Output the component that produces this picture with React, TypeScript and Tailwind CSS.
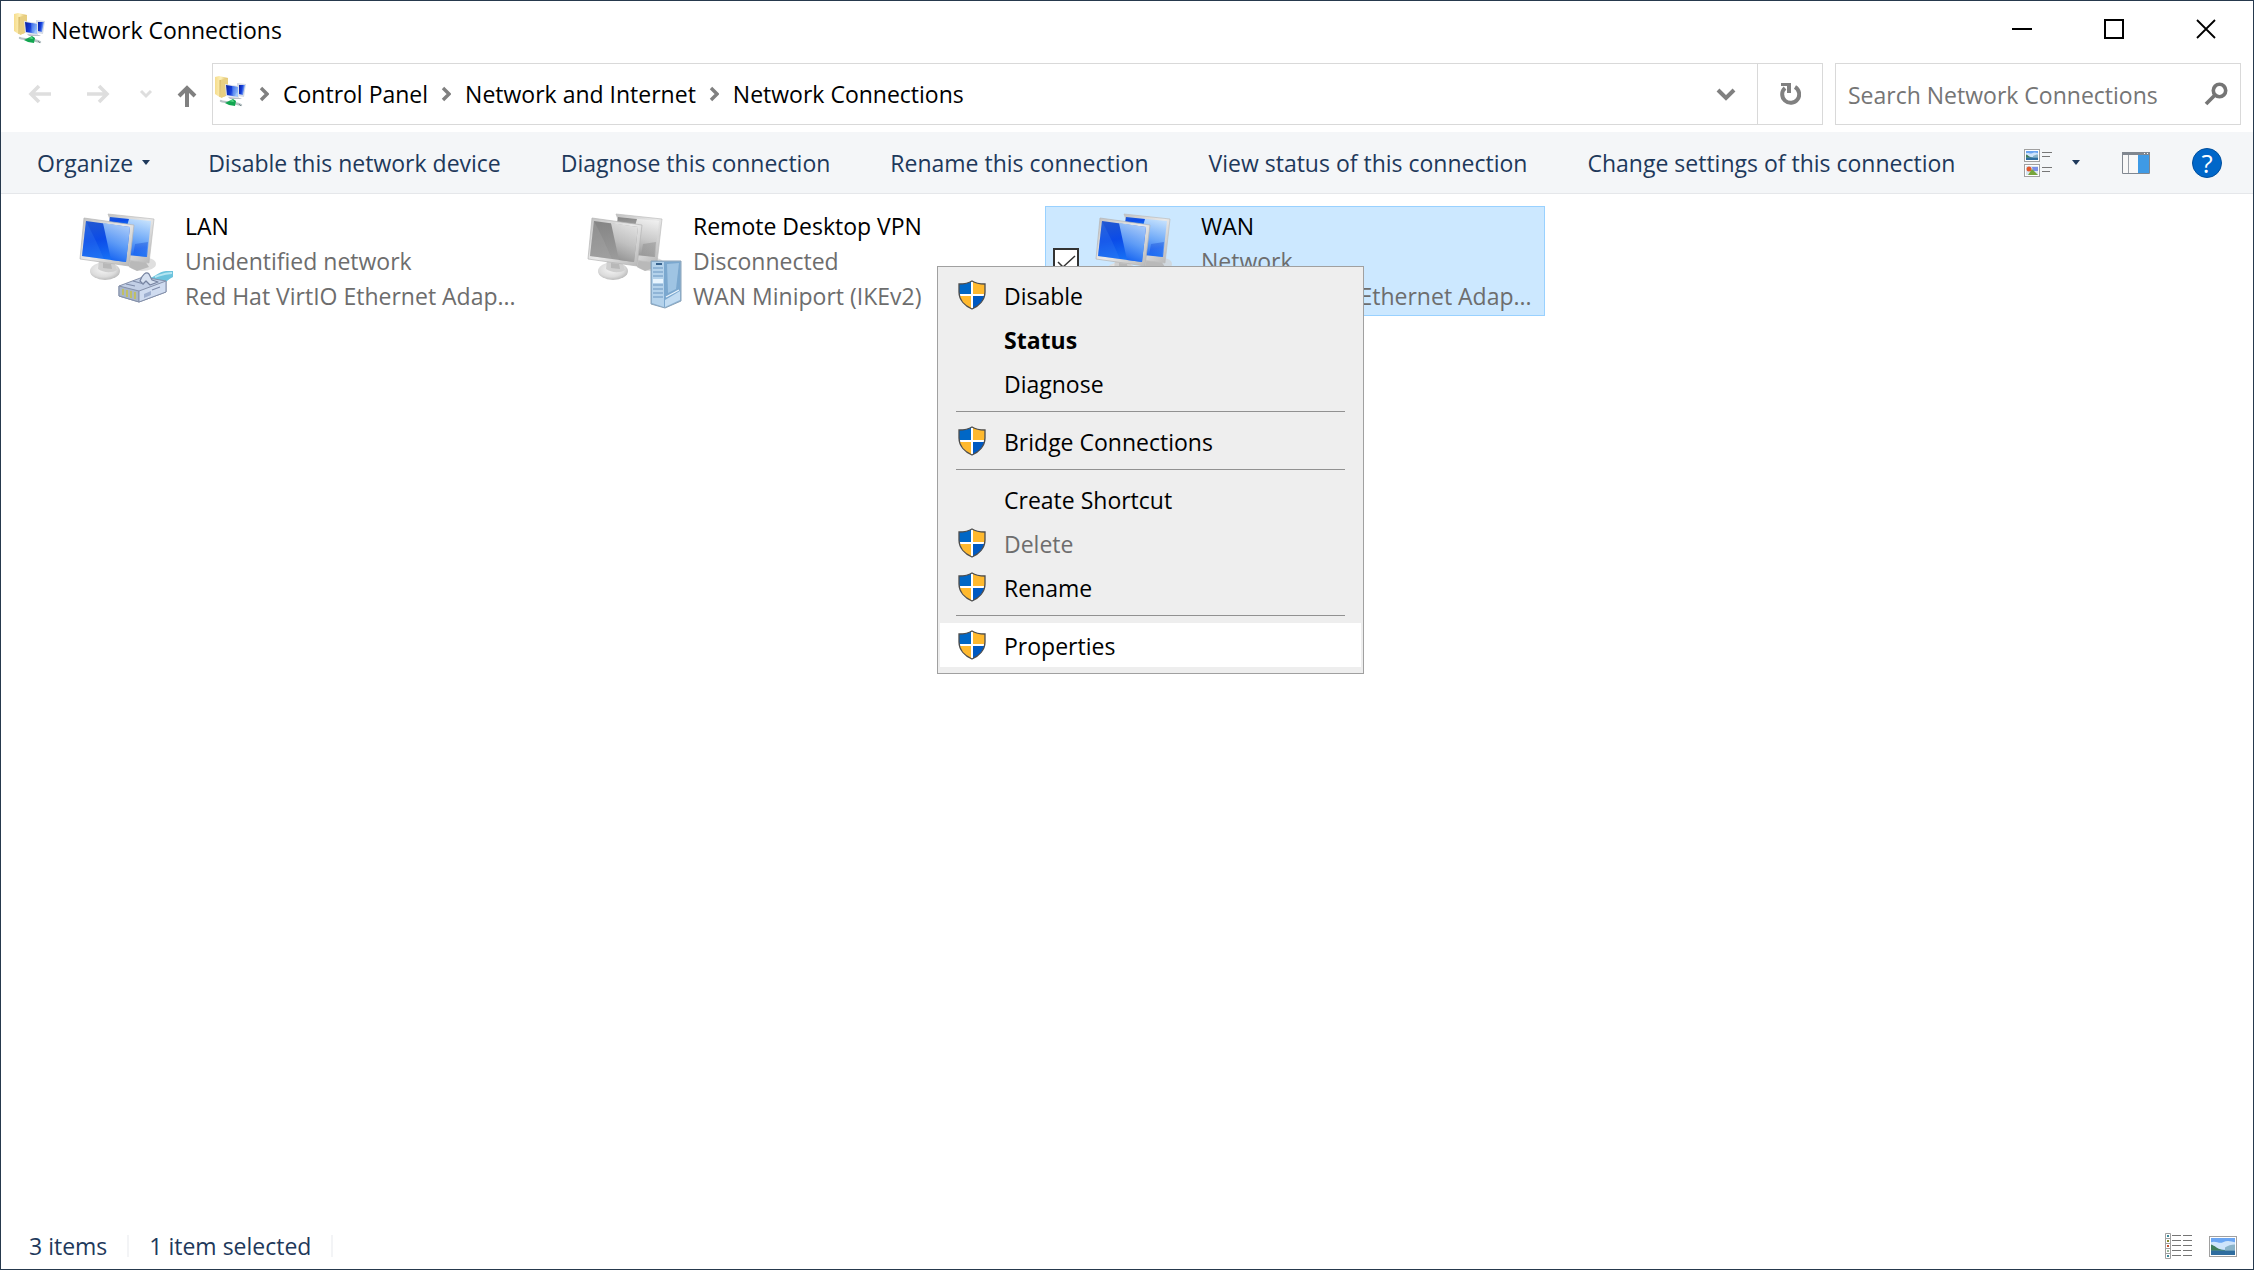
import { useState } from "react";
import type { ReactNode } from "react";

type MenuEntry = {
  label: string;
  shield?: boolean;
  bold?: boolean;
  disabled?: boolean;
  active?: boolean;
};

const MENU_GROUPS: MenuEntry[][] = [
  [
    { label: "Disable", shield: true },
    { label: "Status", bold: true },
    { label: "Diagnose" },
  ],
  [{ label: "Bridge Connections", shield: true }],
  [
    { label: "Create Shortcut" },
    { label: "Delete", shield: true, disabled: true },
    { label: "Rename", shield: true },
  ],
  [{ label: "Properties", shield: true, active: true }],
];

const COMMANDS = [
  "Disable this network device",
  "Diagnose this connection",
  "Rename this connection",
  "View status of this connection",
  "Change settings of this connection",
];

const CRUMBS = ["Control Panel", "Network and Internet", "Network Connections"];

function FolderNetIcon() {
  return (
    <svg viewBox="0 0 32 32" className="size-8 shrink-0" aria-hidden="true">
      <defs>
        <linearGradient id="folder" x1="0" x2="1">
          <stop offset="0" stopColor="#f6dc8b" />
          <stop offset="0.45" stopColor="#fdf0b8" />
          <stop offset="1" stopColor="#d9b65a" />
        </linearGradient>
        <linearGradient id="smallScreen" x1="0" y1="0" x2="1" y2="0.3">
          <stop offset="0" stopColor="#0a1f9c" />
          <stop offset="0.55" stopColor="#1540dd" />
          <stop offset="1" stopColor="#9cc4fb" />
        </linearGradient>
      </defs>
      <path d="M0 1 4 0 13 2v17l-7 3-6-4z" fill="url(#folder)" />
      <path d="M5 4 13 2v17l-7 3z" fill="#e8cf82" />
      <path d="M5 4v17" stroke="#c9a64c" strokeWidth="0.8" />
      <path d="m22 7 9 1-2 13-7-1z" fill="#d5dbe6" />
      <path d="m24 9 6 0-2 10-4-1z" fill="url(#smallScreen)" />
      <path d="m10 8 14 2 0 12-13-2z" fill="#dfe3ea" />
      <path d="m11 9 12 2v10l-11-2z" fill="url(#smallScreen)" />
      <path d="m17 10 6 1v5l-5 4z" fill="#6ea0f5" opacity="0.5" />
      <path d="m13 21 12 1 2 1-12 0z" fill="#b9bfc7" />
      <path d="M6 25c5 2 13 1 20 4" fill="none" stroke="#b7c3c5" strokeWidth="2.4" strokeLinecap="round" />
      <path d="m10 27 8-4 3 2-1 5-6-1z" fill="#12a650" />
      <path d="m14 25 4-1 1 2z" fill="#5ee08c" />
      <path d="m24 28 2 2" stroke="#7d8a8c" strokeWidth="1" />
    </svg>
  );
}

function Monitors({ gray, children }: { gray?: boolean; children?: ReactNode }) {
  const screen = gray ? "url(#screenGray)" : "url(#screenBlue)";
  const gloss = gray ? "url(#glossGray)" : "url(#glossBlue)";
  return (
    <svg viewBox="0 0 96 100" className="h-[100px] w-24 shrink-0" aria-hidden="true">
      <defs>
        <linearGradient id="screenBlue" x1="0" y1="0" x2="0.2" y2="1">
          <stop offset="0" stopColor="#2459cf" />
          <stop offset="0.5" stopColor="#0b4be8" />
          <stop offset="1" stopColor="#1670f5" />
        </linearGradient>
        <linearGradient id="glossBlue" x1="0.6" y1="0" x2="0.3" y2="1">
          <stop offset="0" stopColor="#c3e0fd" />
          <stop offset="0.5" stopColor="#6da8f8" />
          <stop offset="1" stopColor="#0f5cf0" />
        </linearGradient>
        <linearGradient id="screenGray" x1="0" y1="0" x2="0.2" y2="1">
          <stop offset="0" stopColor="#848484" />
          <stop offset="1" stopColor="#9b9b9b" />
        </linearGradient>
        <linearGradient id="glossGray" x1="0.6" y1="0" x2="0.3" y2="1">
          <stop offset="0" stopColor="#efefef" />
          <stop offset="0.5" stopColor="#c8c8c8" />
          <stop offset="1" stopColor="#8e8e8e" />
        </linearGradient>
        <linearGradient id="bezel" x1="0" y1="0" x2="1" y2="1">
          <stop offset="0" stopColor="#c2c2c2" />
          <stop offset="0.5" stopColor="#e9e9e9" />
          <stop offset="1" stopColor="#b4b4b4" />
        </linearGradient>
        <radialGradient id="foot" cx="0.45" cy="0.4" r="0.6">
          <stop offset="0" stopColor="#f6f6f6" />
          <stop offset="0.7" stopColor="#dcdcdc" />
          <stop offset="1" stopColor="#bcbcbc" />
        </radialGradient>
      </defs>
      <ellipse cx="63" cy="54" rx="14" ry="7" fill="#d2d2d2" opacity="0.7" />
      <path d="m52 48 14 3 4 6-12 4-8-4z" fill="#b9b9b9" />
      <path d="m29 4 46 5-5 44-24-3z" fill="url(#bezel)" stroke="#bdbdbd" strokeWidth="0.7" />
      <path d="m31 7 41 4-4 36-20-2z" fill={gloss} />
      <path d="m31 7 19 2-2 7-18-3z" fill={screen} />
      <path d="m56 34 13-2-2 15-13-2z" fill={screen} opacity="0.45" />
      <ellipse cx="26" cy="61" rx="15" ry="9" fill="url(#foot)" />
      <path d="m20 50 15 2 3 8c-6 4-15 2-19-1z" fill="#cfcfcf" />
      <path d="m24 53 8 1 1 5-9-1z" fill="#a9a9a9" opacity="0.6" />
      <path d="m5 8 50 7-5 41-49-7z" fill="url(#bezel)" stroke="#b5b5b5" strokeWidth="0.7" />
      <path d="m7 11 44 6-4 35L3 46z" fill={screen} />
      <path d="m24 13 27 4-4 35-15-2z" fill={gloss} opacity="0.85" />
      <path d="m7 11 10 20 8 18L3 46z" fill={gray ? "#b0b0b0" : "#3f86f5"} opacity="0.25" />
      {children}
    </svg>
  );
}

function EthernetPlug() {
  return (
    <g strokeLinejoin="round">
      <path d="M71 68c6-2 8-6 16-7h7v6c-5 2-8 7-14 8z" fill="#6cc3dd" />
      <path d="M76 67c6-2 9-4 17-4" fill="none" stroke="#b5e6f2" strokeWidth="2" />
      <path d="m40 76 24-9 23 4v11L60 92l-20-6z" fill="#c2cfe6" stroke="#8490aa" />
      <path d="m40 76 20 5v11l-20-6z" fill="#a9b6c8" stroke="#8490aa" />
      <path d="m60 81 27-10v11L60 92z" fill="#d0dcf0" stroke="#8490aa" />
      <path d="M61 71c2-6 6-10 9-7l3 6 6 2-8 3-4-4-3 3z" fill="#d6e0f0" stroke="#75829f" strokeWidth="1.2" />
      <path d="m47 74 9 2m-2-5 11 3m8 6 8-3" stroke="#7f8caa" strokeWidth="1.2" fill="none" />
      <path d="M44 79v6m4-5v7m4-6v7m4-6v7" stroke="#c3c05c" strokeWidth="1.8" />
      <path d="m65 84 7-3v4l-7 3z" fill="#9fb0d0" />
    </g>
  );
}

function ServerTower() {
  return (
    <g strokeLinejoin="round">
      <path d="M64 51h30v40l-16 7-14-4z" fill="#8db3d4" stroke="#8aa3b9" />
      <path d="M65 52h12v45l-12-4z" fill="#b4d2eb" />
      <path d="M77 52h16v38l-16 7z" fill="#7ba8cf" />
      <path d="m80 54 12-1-3 26-8 4z" fill="#a9cbe7" opacity="0.8" />
      <path d="m78 90 15-9v9l-15 7z" fill="#c2dcf2" />
      <path d="m79 87 13-7" stroke="#eaf4fc" strokeWidth="1.3" />
      <path d="M66 58h10m-10 4h10m-10 4h10m-10 9h10m-10 4h10m-10 4h10m-10 4h10" stroke="#82abd0" strokeWidth="1.3" />
      <path d="M66 69h10v4H66z" fill="#e8f5ff" />
      <path d="M69 53h6v2h-6z" fill="#35618d" />
    </g>
  );
}

function Shield() {
  return (
    <svg viewBox="0 0 28 30" className="h-[30px] w-7" aria-hidden="true">
      <clipPath id="shieldClip">
        <path d="M14 1c-3 2-7 3-13 3v8c0 8 6 14 13 17 7-3 13-9 13-17V4C21 4 17 3 14 1z" />
      </clipPath>
      <g clipPath="url(#shieldClip)">
        <path d="M0 0h28v30H0z" fill="#fff" />
        <path d="M0 0h13v14H0z" fill="#0067c6" />
        <path d="M15 0h13v14H15z" fill="#ffb92e" />
        <path d="M0 16h13v14H0z" fill="#ffb92e" />
        <path d="M15 16h13v14H15z" fill="#0059c1" />
      </g>
      <path
        d="M14 1c-3 2-7 3-13 3v8c0 8 6 14 13 17 7-3 13-9 13-17V4C21 4 17 3 14 1z"
        fill="none"
        stroke="#4d4d4d"
        strokeWidth="1.3"
      />
    </svg>
  );
}

function Crumb({ label }: { label: string }) {
  return (
    <li className="flex items-center">
      <svg viewBox="0 0 10 16" className="mr-[14px] h-4 w-[10px]" aria-hidden="true">
        <path d="m2 2 6 6-6 6" fill="none" stroke="#808080" strokeWidth="3.4" />
      </svg>
      <a href="#" className="mr-[13px] text-black">
        {label}
      </a>
    </li>
  );
}

function Landscape({ className }: { className: string }) {
  return (
    <svg viewBox="0 0 24 16" preserveAspectRatio="none" className={className} aria-hidden="true">
      <path d="M0 0h24v16H0z" fill="#6aa5f2" />
      <path d="M0 4c5-2 8 2 12 0s8-1 12 0v7H0z" fill="#cfe4fb" />
      <path d="M0 6c4 1 6 4 11 5s9 0 13 1H0z" fill="#3f7d5c" />
      <path d="M14 9c3-2 6-3 10-3v6H14z" fill="#8ab3c9" />
      <path d="M0 12h24v4H0z" fill="#2f6d9f" />
    </svg>
  );
}

function TitleBar() {
  return (
    <header className="flex h-[62px] shrink-0 items-start">
      <div className="flex h-14 items-center gap-[5px] pl-[13px]">
        <FolderNetIcon />
        <h1 className="pt-0.5 text-black">Network Connections</h1>
      </div>
      <div className="ml-auto flex pr-px">
        <button aria-label="Minimize" className="flex h-14 w-[92px] items-center justify-center">
          <span className="h-0.5 w-5 bg-black" />
        </button>
        <button aria-label="Maximize" className="flex h-14 w-[92px] items-center justify-center">
          <span className="size-5 border-2 border-black" />
        </button>
        <button aria-label="Close" className="flex h-14 w-[92px] items-center justify-center">
          <svg viewBox="0 0 20 20" className="size-5" aria-hidden="true">
            <path d="m1 1 18 18M19 1 1 19" stroke="#000" strokeWidth="1.8" />
          </svg>
        </button>
      </div>
    </header>
  );
}

function AddressRow() {
  return (
    <div className="flex h-[62px] shrink-0 pr-3">
      <nav aria-label="History" className="flex w-[211px] shrink-0 items-center pl-[27px]">
        <button aria-label="Back" disabled>
          <svg viewBox="0 0 24 20" className="h-5 w-6" aria-hidden="true">
            <path d="M23 10H3m8-8-8 8 8 8" fill="none" stroke="#dedede" strokeWidth="3.6" />
          </svg>
        </button>
        <button aria-label="Forward" disabled className="ml-[34px]">
          <svg viewBox="0 0 24 20" className="h-5 w-6" aria-hidden="true">
            <path d="M1 10h20m-8-8 8 8-8 8" fill="none" stroke="#dedede" strokeWidth="3.6" />
          </svg>
        </button>
        <button aria-label="Recent locations" disabled className="ml-[29px]">
          <svg viewBox="0 0 14 10" className="h-[10px] w-[14px]" aria-hidden="true">
            <path d="m2 2 5 5 5-5" fill="none" stroke="#dedede" strokeWidth="3" />
          </svg>
        </button>
        <button aria-label="Up" className="ml-6 mt-1">
          <svg viewBox="0 0 20 24" className="h-6 w-5" aria-hidden="true">
            <path d="M10 23V4m-8 8 8-8 8 8" fill="none" stroke="#808080" strokeWidth="4" />
          </svg>
        </button>
      </nav>
      <div className="flex grow border border-[#d9d9d9]">
        <div className="flex grow items-center pl-0.5">
          <div className="mb-1">
            <FolderNetIcon />
          </div>
          <ol className="ml-3 flex items-center">
            {CRUMBS.map((c) => (
              <Crumb key={c} label={c} />
            ))}
          </ol>
        </div>
        <button aria-label="Previous locations" className="flex w-[62px] items-center justify-center">
          <svg viewBox="0 0 20 14" className="h-[14px] w-5" aria-hidden="true">
            <path d="m2 3 8 8 8-8" fill="none" stroke="#808080" strokeWidth="4" />
          </svg>
        </button>
        <button aria-label="Refresh" className="flex w-[65px] items-center justify-center border-l border-[#d9d9d9]">
          <svg viewBox="0 0 22 24" className="h-6 w-[22px]" aria-hidden="true">
            <path d="M16 5a8.500 8.500 0 1 1-10 1" fill="none" stroke="#808080" strokeWidth="4" />
            <path d="M2 1h10v10H8V4H2z" fill="#808080" />
          </svg>
        </button>
      </div>
      <label className="ml-3 flex w-[406px] shrink-0 items-center border border-[#d9d9d9] pl-3 pr-3">
        <input
          type="search"
          aria-label="Search Network Connections"
          placeholder="Search Network Connections"
          className="min-w-0 grow bg-transparent pt-0.5 outline-none placeholder:text-[#757575]"
        />
        <svg viewBox="0 0 24 24" className="size-6 shrink-0" aria-hidden="true">
          <circle cx="15.500" cy="8.500" r="6.200" fill="none" stroke="#757575" strokeWidth="3.600" />
          <path d="m11 13-9 9" stroke="#757575" strokeWidth="3.800" />
        </svg>
      </label>
    </div>
  );
}

function CaretDown() {
  return (
    <svg viewBox="0 0 8 5" className="h-[5px] w-2" aria-hidden="true">
      <path d="M0 0h8L4 5z" fill="#1e395b" />
    </svg>
  );
}

function CommandBar() {
  return (
    <div className="mt-[7px] flex h-[62px] shrink-0 items-center border-b border-[#e5e7ea] bg-[#f4f6f8] pl-9 pr-[31px] text-[#1e395b]">
      <button className="flex items-center gap-[9px]">
        Organize
        <CaretDown />
      </button>
      <div className="ml-[58px] flex gap-[60px]">
        {COMMANDS.map((c) => (
          <button key={c}>{c}</button>
        ))}
      </div>
      <div className="ml-auto flex items-center">
        <button aria-label="Change your view" className="flex items-center gap-[19px]">
          <span className="flex flex-col gap-0.5">
            <span className="flex gap-0.5">
              <span className="border border-[#a0a0a0] bg-white p-px">
                <Landscape className="h-[9px] w-3" />
              </span>
              <svg viewBox="0 0 11 13" className="h-[13px] w-[11px]" aria-hidden="true">
                <path d="M0 3.500h10M0 7.500h8" stroke="#777" />
              </svg>
            </span>
            <span className="flex gap-0.5">
              <span className="border border-[#a0a0a0] bg-white p-px">
                <svg viewBox="0 0 12 9" className="h-[9px] w-3" aria-hidden="true">
                  <path d="M0 0h12v9H0z" fill="#d9e7f3" />
                  <circle cx="3" cy="3" r="2.500" fill="#e2582c" />
                  <path d="M6 1h6v4H7z" fill="#7b8fe6" />
                  <path d="m2 9 4-6 4 4 2 2z" fill="#77a63c" />
                </svg>
              </span>
              <svg viewBox="0 0 11 13" className="h-[13px] w-[11px]" aria-hidden="true">
                <path d="M0 3.500h10M0 7.500h8" stroke="#777" />
              </svg>
            </span>
          </span>
          <CaretDown />
        </button>
        <button aria-label="Show the preview pane" className="ml-[42px]">
          <svg viewBox="0 0 28 22" className="h-[22px] w-7" aria-hidden="true">
            <path d="M0.500 0.500h27v21H0.500z" fill="#f8f8f8" stroke="#808790" />
            <path d="M0 0h28v3H0z" fill="#808790" />
            <path d="M22 1h1v1h-1zM25 1h1v1h-1z" fill="#fff" />
            <path d="M6.500 3v18" stroke="#9aa0a8" />
            <path d="M16 3h11v18H16z" fill="#3f9ae5" />
          </svg>
        </button>
        <button
          aria-label="Get help"
          className="ml-[42px] flex size-[30px] items-center justify-center rounded-full border border-[#004f9e] bg-[#0067c9] text-[26px] leading-none text-white"
        >
          ?
        </button>
      </div>
    </div>
  );
}

function Tile({ name, status, device, icon, selected }: {
  name: string;
  status: string;
  device: string;
  icon: ReactNode;
  selected?: boolean;
}) {
  return (
    <div
      role="option"
      aria-selected={selected ?? false}
      className={
        selected
          ? "flex h-[110px] w-[500px] border border-[#99d1ff] bg-[#cce8ff]"
          : "flex h-[110px] w-[500px] border border-transparent"
      }
    >
      <div className="flex w-[49px] items-center pl-[7px]">
        {selected && (
          <label className="grid">
            <input
              type="checkbox"
              defaultChecked
              aria-label={name}
              className="col-start-1 row-start-1 size-[26px] appearance-none border-2 border-[#333] bg-white"
            />
            <svg viewBox="0 0 26 26" className="pointer-events-none col-start-1 row-start-1 size-[26px]" aria-hidden="true">
              <path d="m5 14 5 5L22 8" fill="none" stroke="#333" strokeWidth="1.500" />
            </svg>
          </label>
        )}
      </div>
      <div className="pt-[3px]">{icon}</div>
      <div className="pl-[10px] pt-0.5 leading-[35px]">
        <div className="text-black">{name}</div>
        <div className="text-[#6d6d6d]">{status}</div>
        <div className="whitespace-nowrap text-[#6d6d6d]">{device}</div>
      </div>
    </div>
  );
}

function ContextMenu() {
  return (
    <div
      role="menu"
      className="absolute left-[-108px] top-[60px] z-10 w-[427px] border border-[#a0a0a0] bg-[#eeeeee] px-0.5 py-[6px]"
    >
      {MENU_GROUPS.map((group, i) => (
        <div key={i} role="group">
          {i > 0 && <div role="separator" className="mx-4 mb-[7px] mt-[6px] h-px bg-[#919191]" />}
          {group.map((entry) => (
            <button
              key={entry.label}
              role="menuitem"
              disabled={entry.disabled}
              className={`flex h-11 w-full items-center pl-[18px] text-left ${
                entry.active ? "bg-white" : ""
              } ${entry.bold ? "font-bold" : ""} ${entry.disabled ? "text-[#6d6d6d]" : "text-black"}`}
            >
              <span className="w-[46px]">{entry.shield && <Shield />}</span>
              <span className="pt-0.5">{entry.label}</span>
            </button>
          ))}
        </div>
      ))}
    </div>
  );
}

function StatusBar({ view, onView }: { view: string; onView: (v: string) => void }) {
  return (
    <footer className="flex h-[46px] shrink-0 items-center pl-7 pr-4 text-[#1e395b]">
      <span>3 items</span>
      <span className="mx-5 h-[22px] w-0.5 bg-[#f3f4f6]" />
      <span>1 item selected</span>
      <span className="mx-5 h-[22px] w-0.5 bg-[#f3f4f6]" />
      <div className="ml-auto flex items-center gap-4">
        <button aria-label="Details" aria-pressed={view === "details"} onClick={() => onView("details")}>
          <svg viewBox="0 0 28 26" className="h-[26px] w-7" aria-hidden="true">
            <path d="M0.500 0.500h5v25h-5zM0 5.500h6M0 10.500h6M0 15.500h6M0 20.500h6" fill="none" stroke="#a0a0a0" />
            <path d="M2 2h2v2H2zM2 22h2v2H2z" fill="#3c8a9a" />
            <path d="M2 7h2v2H2z" fill="#8a8a2c" />
            <path d="M2 12h2v2H2z" fill="#c8502c" />
            <path d="M2 17h2v2H2z" fill="#9cb79c" />
            <path
              d="M7 2.500h9m2 0h9M7 7.500h9m2 0h9M7 12.500h9m2 0h9M7 17.500h9m2 0h9M7 22.500h9m2 0h9"
              stroke="#757575"
            />
          </svg>
        </button>
        <button
          aria-label="Large icons"
          aria-pressed={view === "tiles"}
          onClick={() => onView("tiles")}
          className="border border-[#a0a0a0] bg-white p-px"
        >
          <Landscape className="h-[17px] w-6" />
        </button>
      </div>
    </footer>
  );
}

export default function App() {
  const [view, setView] = useState("tiles");

  return (
    <div className="flex min-h-screen flex-col border border-[#26394d] bg-white font-['Open_Sans','Noto_Sans',sans-serif] text-[23px] leading-8">
      <TitleBar />
      <AddressRow />
      <CommandBar />
      <main className="flex grow items-start gap-2 pl-7 pt-3" role="listbox" aria-label="Connections">
        <Tile
          name="LAN"
          status="Unidentified network"
          device="Red Hat VirtIO Ethernet Adap..."
          icon={
            <Monitors>
              <EthernetPlug />
            </Monitors>
          }
        />
        <Tile
          name="Remote Desktop VPN"
          status="Disconnected"
          device="WAN Miniport (IKEv2)"
          icon={
            <Monitors gray>
              <ServerTower />
            </Monitors>
          }
        />
        <div className="relative">
          <Tile
            name="WAN"
            status="Network"
            device="Red Hat VirtIO Ethernet Adap..."
            selected
            icon={
              <Monitors>
                <EthernetPlug />
              </Monitors>
            }
          />
          <ContextMenu />
        </div>
      </main>
      <StatusBar view={view} onView={setView} />
    </div>
  );
}
